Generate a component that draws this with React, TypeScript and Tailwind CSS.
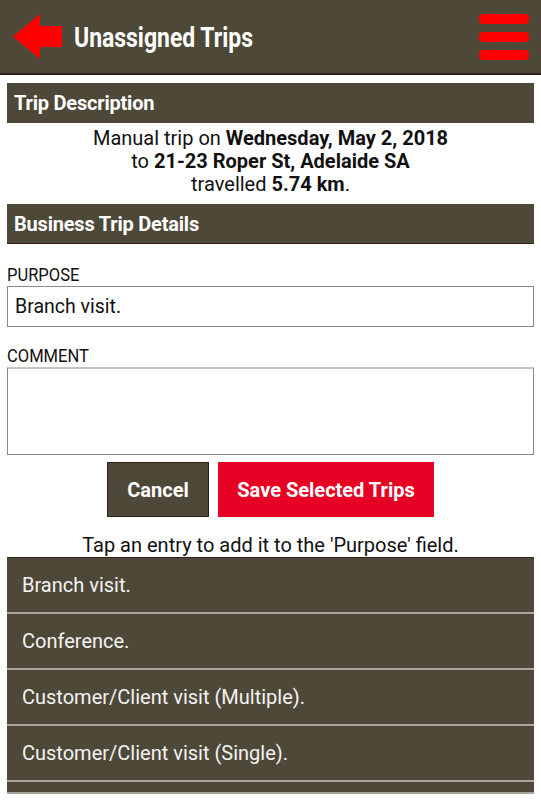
import React from 'react';

const purposes = [
  'Branch visit.',
  'Conference.',
  'Customer/Client visit (Multiple).',
  'Customer/Client visit (Single).',
];

// Barra de sección marrón
const SectionBar = ({ title, className = '' }: { title: string; className?: string }) => (
  <div className={`h-[40px] bg-[#4e4839] flex items-center pl-[7px] ${className}`}>
    <span className="text-white font-bold text-[20px] tracking-[-0.2px]">{title}</span>
  </div>
);

const FieldLabel = ({ text }: { text: string }) => (
  <div className="h-[22px] flex items-center">
    <span className="text-[19px] text-[#111] origin-left scale-x-[0.87] inline-block leading-none">{text}</span>
  </div>
);

export default function App() {
  return (
    <div className="w-[541px] h-[800px] bg-white overflow-hidden font-['Roboto',sans-serif]">
      {/* Header */}
      <header className="h-[75px] bg-[#4e4839] border-b-2 border-[#2b2415] flex items-center">
        <svg width="49" height="45" viewBox="0 0 49 45" className="ml-[13px] shrink-0">
          <polygon points="0,22.5 27,0 27,12 49,12 49,33 27,33 27,45" fill="#ff0000" />
        </svg>
        <h1 className="ml-[12px] mt-[3px] text-white font-bold text-[27px] origin-left scale-x-[0.85] whitespace-nowrap leading-none">
          Unassigned Trips
        </h1>
        <div className="ml-auto mr-[12px] flex flex-col gap-[8px]">
          <span className="block w-[50px] h-[10px] rounded-[4px] bg-[#ff0000]" />
          <span className="block w-[50px] h-[10px] rounded-[4px] bg-[#ff0000]" />
          <span className="block w-[50px] h-[10px] rounded-[4px] bg-[#ff0000]" />
        </div>
      </header>

      <main className="px-[7px] pt-[8px]">
        <SectionBar title="Trip Description" />
        <div className="text-center text-[20px] leading-[23px] text-[#111] pt-[4px] pb-[8px]">
          <p>Manual trip on <b>Wednesday, May 2, 2018</b></p>
          <p>to <b>21-23 Roper St, Adelaide SA</b></p>
          <p>travelled <b>5.74 km</b>.</p>
        </div>
        <SectionBar title="Business Trip Details" className="border-b border-[#3a1c17]" />

        <div className="mt-[19px]">
          <FieldLabel text="PURPOSE" />
          <div className="mt-[1px] h-[41px] border border-[#8a8a84] flex items-center pl-[7px] text-[19.5px] text-[#111]">
            Branch visit.
          </div>
        </div>
        <div className="mt-[17px]">
          <FieldLabel text="COMMENT" />
          <div className="mt-[1px] h-[88px] border border-[#8a8a84] border-t-[#c4c4c0] border-t-2" />
        </div>

        <div className="mt-[7px] flex justify-center gap-[9px]">
          <button className="w-[102px] h-[55px] bg-[#4e4839] border border-[#2b2415] text-white font-bold text-[20px]">
            Cancel
          </button>
          <button className="w-[216px] h-[55px] bg-[#e60023] text-white font-bold text-[20px]">
            Save Selected Trips
          </button>
        </div>

        <p className="mt-[17px] text-center text-[20px] leading-[22px] text-[#111]">
          Tap an entry to add it to the 'Purpose' field.
        </p>

        <ul className="mt-[1px] h-[237px] overflow-hidden bg-[#4e4839] border-b-2 border-[#a8a49a] border-t border-t-[#2b2415]">
          {purposes.map(p => (
            <li key={p} className="h-[56px] border-b-2 border-[#a8a49a] flex items-center pl-[15px] text-[20px] text-[#f4f4f2]">
              {p}
            </li>
          ))}
        </ul>
      </main>
    </div>
  );
}
